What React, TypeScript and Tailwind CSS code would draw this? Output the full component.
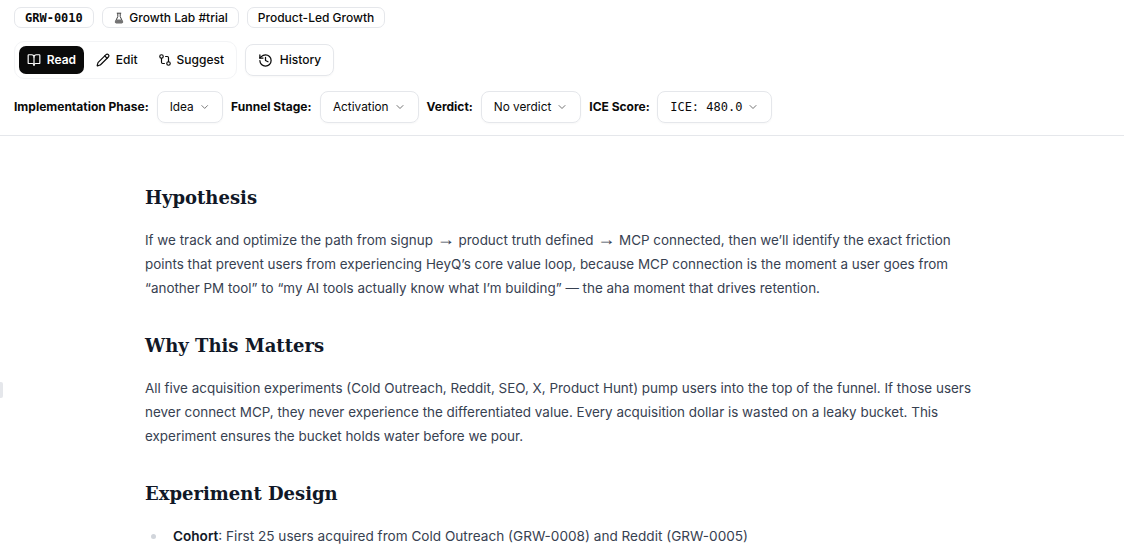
import { BookOpen, Pencil, GitCompare, History, ChevronDown } from "lucide-react";

const inter = "font-['Inter',sans-serif]";
const serif = "font-['DejaVu_Serif',serif]";
const mono = "font-['DejaVu_Sans_Mono',monospace]";

function Pill({ children, className = "" }: { children: React.ReactNode; className?: string }) {
  return (
    <span className={`flex h-[21px] items-center gap-[4px] rounded-[7px] border border-[#e5e7eb] text-[12px] text-[#0a0a0a] ${className}`}>
      {children}
    </span>
  );
}

function Select({ children, className = "", textClass = "pt-[2px]" }: { children: React.ReactNode; className?: string; textClass?: string }) {
  return (
    <button className={`flex h-[32px] items-center gap-[5px] rounded-[8px] border border-[#e5e7eb] px-[12px] text-[11.8px] text-[#0a0a0a] shadow-[0_1px_2px_rgba(0,0,0,0.03)] ${className}`}>
      <span className={textClass}>{children}</span>
      <ChevronDown size={12} className="text-[#737373]" />
    </button>
  );
}

function Label({ children }: { children: React.ReactNode }) {
  return <span className="text-[12px] font-bold text-[#0a0a0a]">{children}</span>;
}

function H2({ children }: { children: React.ReactNode }) {
  return <h2 className={`${serif} text-[18px] leading-[28px] font-semibold text-[#111827]`}>{children}</h2>;
}

function P({ children }: { children: React.ReactNode }) {
  return <p className="mt-[16px] whitespace-nowrap text-[13.45px] leading-[24px] text-[#374151]">{children}</p>;
}

function Arrow() {
  return <span className="font-['Liberation_Sans',sans-serif] text-[18px] leading-none">→</span>;
}

function Flask() {
  return (
    <svg width="12" height="12" viewBox="0 0 12 12" fill="none" stroke="#404040" strokeWidth="1" strokeLinejoin="round">
      <path d="M3.8 1.2h4.4" />
      <path d="M4.8 1.2v3.4L2.4 9.6c-.3.7.1 1.3.8 1.3h5.6c.7 0 1.1-.6.8-1.3L7.2 4.6V1.2" />
      <path d="M3.6 7.4h4.8l1 2.6v.9H2.6V10z" fill="#737373" stroke="none" />
    </svg>
  );
}

export default function App() {
  return (
    <div className={`${inter} relative h-[549px] w-[1124px] overflow-hidden bg-white`}>
      <header className="flex h-[136px] flex-col border-b border-[#e5e7eb] px-[14px] pt-[7px]">
        <div className="flex gap-[8px]">
          <Pill className={`${mono} px-[10px] font-bold`}>GRW-0010</Pill>
          <Pill className="px-[10.5px] font-medium">
            <Flask />
            Growth Lab #trial
          </Pill>
          <Pill className="px-[9.5px] font-medium">Product-Led Growth</Pill>
        </div>
        <div className="mt-[13px] flex items-center gap-[8px]">
          <div className="flex h-[38px] w-[223px] items-center gap-[4px] rounded-[10px] border border-[#f3f4f6] px-[4px] text-[12px] font-medium text-[#0a0a0a]">
            <span className="flex h-[28px] w-[66px] items-center justify-center gap-[6px] rounded-[7px] bg-[#0a0a0a] font-semibold text-white">
              <BookOpen size={14} />
              Read
            </span>
            <span className="flex h-[28px] items-center gap-[6px] px-[8px]">
              <Pencil size={14} />
              Edit
            </span>
            <span className="flex h-[28px] items-center gap-[5px] px-[8px]">
              <GitCompare size={14} />
              Suggest
            </span>
          </div>
          <button className="flex h-[32px] w-[89px] items-center justify-center gap-[7px] rounded-[8px] border border-[#e5e7eb] text-[12px] font-medium text-[#0a0a0a] shadow-[0_1px_2px_rgba(0,0,0,0.03)]">
            <History size={15} />
            History
          </button>
        </div>
        <div className="mt-[12px] flex items-center gap-[8px]">
          <Label>Implementation Phase:</Label>
          <Select className="w-[66.4px]">Idea</Select>
          <Label>Funnel Stage:</Label>
          <Select className="ml-[0.6px]">Activation</Select>
          <Label>Verdict:</Label>
          <Select>No verdict</Select>
          <Label>ICE Score:</Label>
          <Select className="ml-[-0.5px]" textClass=""><span className={`${mono} text-[12px]`}>ICE: 480.0</span></Select>
        </div>
      </header>
      <span className="absolute left-0 top-[382px] h-[16px] w-[3px] rounded-r-[2px] bg-[#e5e7eb]" />
      <main className="px-[145px] pt-[48px]">
        <H2>Hypothesis</H2>
        <P>
          If we track and optimize the path from signup <Arrow /> product truth defined <Arrow /> MCP connected, then we’ll identify the exact friction
          <br />
          points that prevent users from experiencing HeyQ’s core value loop, because MCP connection is the moment a user goes from
          <br />
          “another PM tool” to “my AI tools actually know what I’m building” — the aha moment that drives retention.
        </P>
        <div className="h-[32px]" />
        <H2>Why This Matters</H2>
        <P>
          All five acquisition experiments (Cold Outreach, Reddit, SEO, X, Product Hunt) pump users into the top of the funnel. If those users
          <br />
          never connect MCP, they never experience the differentiated value. Every acquisition dollar is wasted on a leaky bucket. This
          <br />
          experiment ensures the bucket holds water before we pour.
        </P>
        <div className="h-[32px]" />
        <H2>Experiment Design</H2>
        <ul className="mt-[16px] text-[13.6px] leading-[24px] text-[#374151]">
          <li className="relative pl-[28px]">
            <span className="absolute left-[6px] top-[10px] size-[5px] rounded-full bg-[#d1d5db]" />
            <strong className="font-semibold text-[#111827]">Cohort</strong>: First 25 users acquired from Cold Outreach (GRW-0008) and Reddit (GRW-0005)
          </li>
        </ul>
      </main>
    </div>
  );
}
